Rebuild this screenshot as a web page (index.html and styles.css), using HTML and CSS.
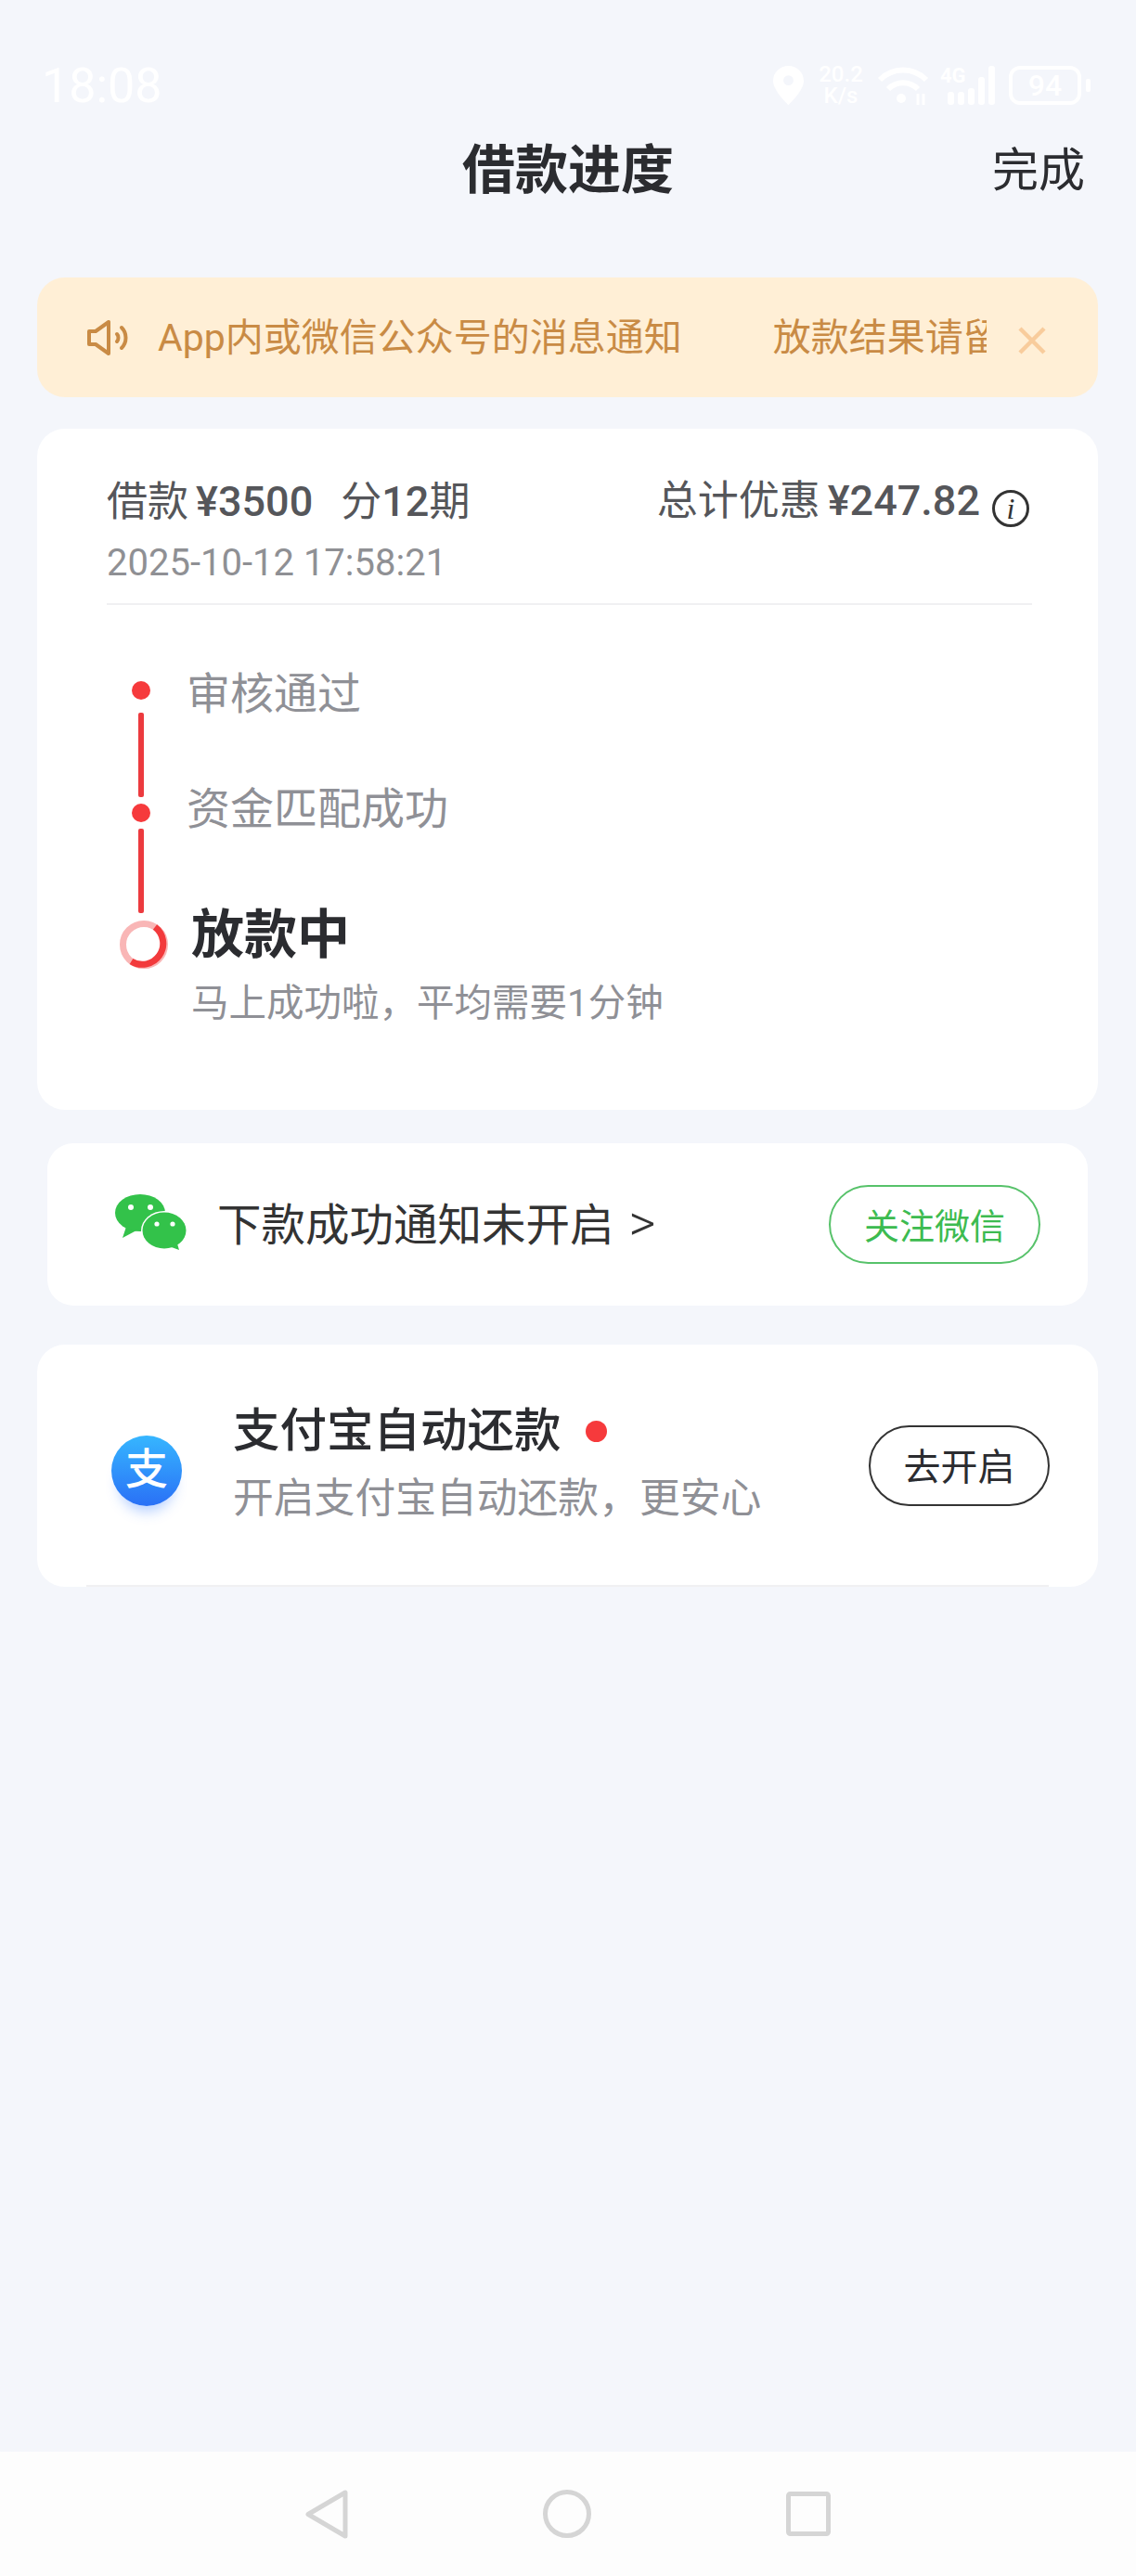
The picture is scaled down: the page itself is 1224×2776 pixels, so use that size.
FILE: index.html
```html
<!DOCTYPE html>
<html lang="zh-CN">
<head>
<meta charset="utf-8"/>
<meta content="width=device-width, initial-scale=1.0" name="viewport"/>
<title>借款进度</title>
<link rel="stylesheet" href="styles.css">
</head>
<body>
<div class="page">

<div class="status-bar">
  <span class="time">18:08</span>
  <div class="status-icons">
    <svg class="pin" width="33" height="42" viewBox="0 0 33 42"><path d="M16.5 0C7.4 0 0 7.2 0 16.2 0 27 16.5 42 16.5 42S33 27 33 16.2C33 7.2 25.6 0 16.5 0Zm0 21a5.4 5.4 0 1 1 0-10.8 5.4 5.4 0 0 1 0 10.8Z" fill="#fff"/></svg>
    <span class="speed">20.2<br>K/s</span>
    <svg class="wifi" width="56" height="42" viewBox="0 0 56 42" fill="none" stroke="#fff" stroke-width="6"><path d="M3 15C17 1 39 1 53 15"/><path d="M12 25c9-9 23-9 32 0"/><circle cx="26" cy="35" r="5" fill="#fff" stroke="none"/><path d="M44 30v12" stroke-width="3"/><path d="M50 30v12" stroke-width="3"/></svg>
    <div class="signal">
      <span class="net">4G</span>
      <i class="b1"></i><i class="b2"></i><i class="b3"></i><i class="b4"></i><i class="b5"></i>
    </div>
    <div class="battery"><span>94</span></div>
    <i class="battery-cap"></i>
  </div>
</div>

<div class="top-nav">
  <h1>借款进度</h1>
  <a class="done">完成</a>
</div>

<div class="notice">
  <svg class="speaker" width="47" height="38" viewBox="0 0 47 38" fill="none" stroke="#c98b45" stroke-width="4" stroke-linejoin="round" stroke-linecap="round"><path d="M3 12h7L24 2v34L10 26H3Z"/><path d="M33 15c2 2 2 6 0 8"/><path d="M38 8c6 6 6 16 0 22"/></svg>
  <div class="notice-text"><span>App内或微信公众号的消息通知</span><span>放款结果请留意</span></div>
  <svg class="notice-close" width="32" height="32" viewBox="0 0 32 32" stroke="#f8cc9c" stroke-width="4.5"><path d="M3 3l26 26M29 3L3 29"/></svg>
</div>

<div class="card progress">
  <div class="loan-head">
    <div class="loan-amount">借款<b>¥3500</b><span class="term">分<em>12</em>期</span></div>
    <div class="loan-discount">总计优惠<b>¥247.82</b><i class="info">i</i></div>
  </div>
  <div class="loan-date">2025-10-12 17:58:21</div>
  <div class="timeline">
    <div class="rail">
      <i class="dot"></i><i class="line"></i><i class="dot"></i><i class="line"></i>
      <svg class="ring" width="52" height="52" viewBox="0 0 52 52" fill="none" stroke-width="7"><circle cx="26" cy="26" r="22.5" stroke="#f9b6b6"/><path d="M38 7A22.5 22.5 0 0 1 12.5 44" stroke="#f23a3c"/></svg>
    </div>
    <div class="steps">
      <div class="step">审核通过</div>
      <div class="step second">资金匹配成功</div>
      <div class="step-now">放款中</div>
      <div class="step-tip">马上成功啦，平均需要1分钟</div>
    </div>
  </div>
</div>

<div class="card wechat">
  <svg class="wechat-icon" width="80" height="60" viewBox="0 0 80 60">
    <path d="M14 35L10 47L25 39Z" fill="#33c24a"/>
    <ellipse cx="29" cy="20" rx="27" ry="20" fill="#33c24a"/>
    <circle cx="19" cy="14" r="3" fill="#fff"/><circle cx="40" cy="14" r="3" fill="#fff"/>
    <ellipse cx="55" cy="39" rx="25" ry="21" fill="#fff"/>
    <ellipse cx="55" cy="39" rx="23.5" ry="19.5" fill="#33c24a"/>
    <path d="M60 56L71 60L68 50Z" fill="#33c24a"/>
    <circle cx="47" cy="32" r="2.6" fill="#fff"/><circle cx="64" cy="32" r="2.6" fill="#fff"/>
  </svg>
  <div class="wechat-text">下款成功通知未开启<span class="chevron">&gt;</span></div>
  <a class="btn btn-green">关注微信</a>
</div>

<div class="card alipay">
  <div class="alipay-icon">支</div>
  <div class="alipay-text">
    <div class="alipay-title">支付宝自动还款<i class="red-dot"></i></div>
    <div class="alipay-sub">开启支付宝自动还款，更安心</div>
  </div>
  <a class="btn btn-dark">去开启</a>
</div>

<div class="bottom-nav">
  <svg width="46" height="53" viewBox="0 0 46 53" fill="none" stroke="#d5d5d5" stroke-width="5" stroke-linejoin="round"><path d="M43 3V50L3 26.5Z"/></svg>
  <svg width="52" height="52" viewBox="0 0 52 52" fill="none" stroke="#d5d5d5" stroke-width="5"><circle cx="26" cy="26" r="23.5"/></svg>
  <svg width="48" height="48" viewBox="0 0 48 48" fill="none" stroke="#d5d5d5" stroke-width="5" stroke-linejoin="round"><rect x="2.5" y="2.5" width="43" height="43" rx="2"/></svg>
</div>

</div>
</body>
</html>
```

FILE: styles.css
```css
* { box-sizing: border-box; }
body { margin: 0; background: #f4f6fb; font-family: Roboto, "Noto Sans CJK SC", sans-serif; color: #2b2c30; }
i, em { font-style: normal; }
.page { display: flex; flex-direction: column; min-height: 2776px; }

.status-bar { display: flex; justify-content: space-between; align-items: center; height: 52px; margin-top: 66px; padding: 0 49px 0 45px; color: #fff; }
.time { padding-top: 2px; font-size: 52px; line-height: 52px; }
.status-icons { display: flex; align-items: center; }
.speed { margin-left: 13px; width: 54px; font-size: 24px; line-height: 23px; font-weight: 500; text-align: center; }
.wifi { margin-left: 12px; }
.signal { display: flex; align-items: flex-end; gap: 4px; height: 42px; margin-left: 12px; padding-left: 8px; position: relative; }
.signal i { width: 7px; background: #fff; border-radius: 3px; }
.signal .b1 { height: 14px; }
.signal .b2 { height: 14px; }
.signal .b3 { height: 18px; }
.signal .b4 { height: 30px; }
.signal .b5 { height: 42px; }
.net { position: absolute; left: 0; top: 0; font-size: 22px; line-height: 22px; font-weight: 700; }
.battery { display: flex; align-items: center; justify-content: center; width: 78px; height: 42px; margin-left: 15px; border: 4px solid #fff; border-radius: 12px; font-size: 32px; font-weight: 500; }
.battery-cap { width: 5px; height: 14px; margin-left: 5px; background: #fff; border-radius: 2px; }

.top-nav { display: grid; grid-template-columns: 1fr auto 1fr; align-items: center; height: 130px; padding: 2px 55px 0; }
.top-nav h1 { grid-column: 2; margin: 0; font-size: 57px; line-height: 70px; font-weight: 700; }
.done { justify-self: end; font-size: 50px; line-height: 70px; }

.notice { display: flex; align-items: center; height: 129px; margin: 51px 41px 0 40px; padding-left: 53px; background: #ffefd6; border-radius: 30px; color: #c98b45; }
.speaker { flex: none; }
.notice-text { display: flex; width: 893px; margin-left: 30px; overflow: hidden; white-space: nowrap; font-size: 41px; line-height: 60px; }
.notice-text span { flex: none; margin-right: 98px; }
.notice-close { flex: none; margin: 6px 0 0 33px; }

.card { background: #fff; border-radius: 30px; }
.progress { height: 734px; margin: 34px 41px 0 40px; padding: 52px 71px 0 75px; }
.loan-head { display: flex; justify-content: space-between; align-items: center; margin-right: 3px; font-size: 44px; line-height: 52px; color: #55565a; }
.loan-head b, .loan-head em { font-size: 45px; font-weight: 500; }
.loan-amount b { margin-left: 8px; }
.term { margin-left: 30px; }
.loan-discount b { margin-left: 8px; }
.info { display: inline-flex; justify-content: center; align-items: center; width: 40px; height: 40px; margin-left: 13px; border: 3px solid #333; border-radius: 50%; font-family: "Liberation Serif", serif; font-style: italic; font-size: 32px; line-height: 1; color: #333; vertical-align: -4px; }
.loan-date { margin-top: 16px; padding-bottom: 20px; border-bottom: 2px solid #f0f0f2; font-size: 40px; line-height: 46px; color: #8f9094; }

.timeline { display: flex; margin-top: 71px; }
.rail { display: flex; flex-direction: column; align-items: center; width: 74px; padding-top: 11px; }
.dot { width: 20px; height: 20px; background: #f63a3c; border-radius: 50%; }
.line { width: 6px; height: 91px; margin: 14px 0 7px; background: #ec3a3e; border-radius: 2px; }
.rail .line:nth-child(4) { margin-top: 7px; margin-bottom: 8px; }
.ring { margin-left: 6px; }
.steps { margin-left: 12px; padding-top: 2px; }
.step { font-size: 47px; line-height: 46px; color: #8f9096; }
.step.second { margin-top: 78px; }
.step-now { margin-top: 83px; padding-left: 5px; font-size: 57px; line-height: 60px; font-weight: 700; color: #2b2c30; }
.step-tip { margin-top: 21px; padding-left: 5px; font-size: 40.5px; line-height: 44px; color: #8f9096; }

.wechat { display: flex; align-items: center; height: 175px; margin: 36px 52px 0 51px; padding: 0 51px 0 71px; border-radius: 28px; }
.wechat-icon { flex: none; margin-top: -6px; }
.wechat-text { flex: 1; margin-left: 32px; font-size: 47.5px; line-height: 60px; color: #333; }
.chevron { margin-left: 16px; font-size: 56px; font-weight: 300; }

.btn { display: flex; justify-content: center; align-items: center; border-radius: 44px; }
.btn-green { width: 228px; height: 85px; padding-bottom: 3px; border: 2px solid #57c26a; font-size: 38px; color: #3dbb50; }
.btn-dark { width: 195px; height: 87px; padding-bottom: 4px; border: 2px solid #333; font-size: 40px; color: #2b2c30; }

.alipay { display: flex; align-items: center; height: 261px; margin: 42px 41px 0 40px; padding: 0 52px 0 80px; position: relative; }
.alipay::after { content: ""; position: absolute; left: 53px; right: 53px; bottom: 0; height: 2px; background: #f0f0f2; }
.alipay-icon { flex: none; display: flex; justify-content: center; align-items: center; width: 76px; height: 76px; margin-top: 10px; padding-bottom: 4px; background: linear-gradient(#36b6ff, #2a70f6); border-radius: 50%; box-shadow: 0 14px 14px -8px rgba(50, 120, 255, .35); font-size: 46px; line-height: 1; font-weight: 500; color: #fff; }
.alipay-text { flex: 1; margin-left: 55px; margin-top: -2px; }
.alipay-title { display: flex; align-items: center; font-size: 50.5px; line-height: 60px; font-weight: 500; color: #2b2c30; }
.red-dot { width: 23px; height: 23px; margin-left: 26px; background: #f63a3c; border-radius: 50%; }
.alipay-sub { margin-top: 13px; font-size: 43.8px; line-height: 60px; color: #8f9096; }

.bottom-nav { display: flex; justify-content: center; align-items: center; gap: 210px; height: 134px; margin-top: auto; background: #fdfdfd; }
```
